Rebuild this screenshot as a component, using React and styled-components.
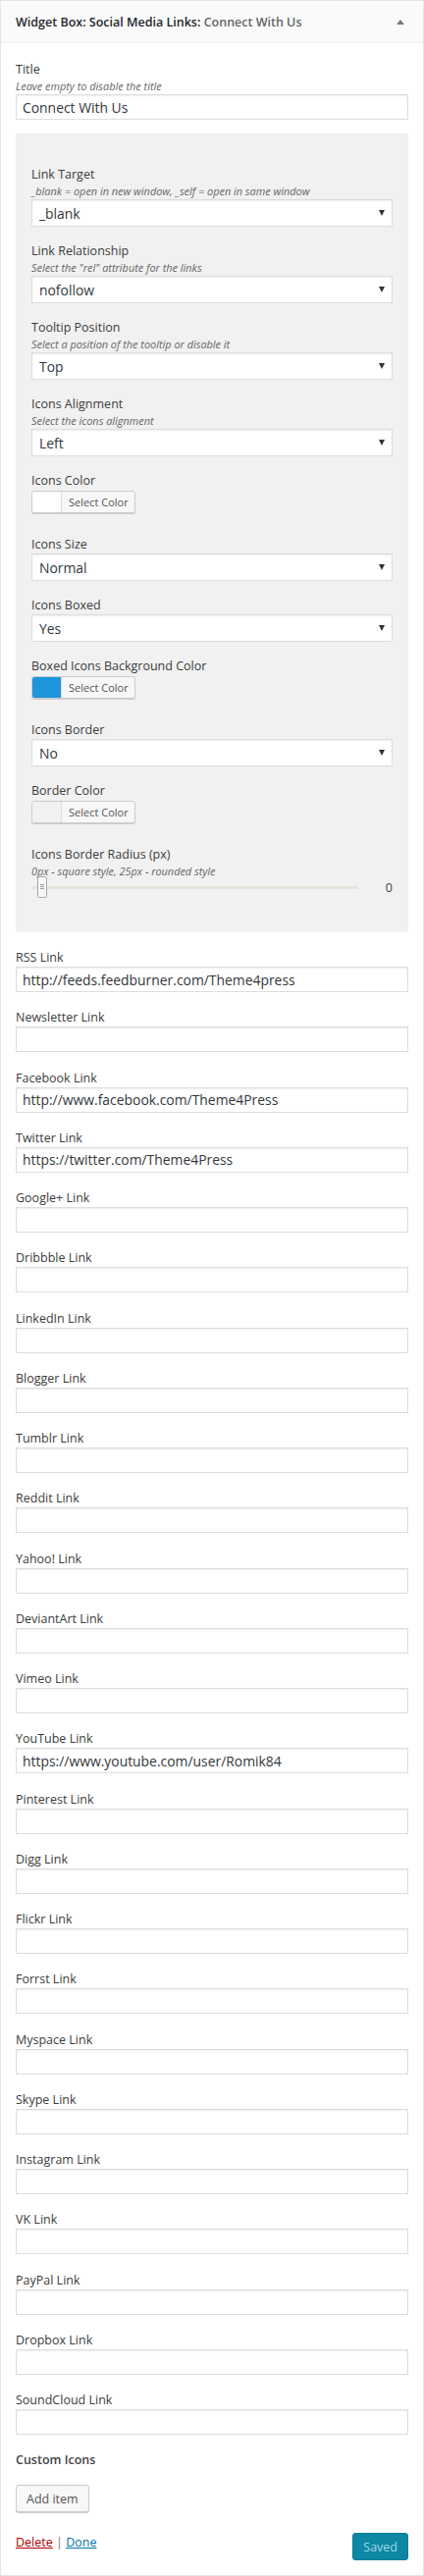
import React from 'react';
import styled, { createGlobalStyle } from 'styled-components';

const GlobalStyle = createGlobalStyle`
  html, body {
    margin: 0;
    padding: 0;
    background: #fff;
  }
  body {
    font-family: "Open Sans", "Noto Sans", sans-serif;
    font-size: 12.5px;
    color: #444;
  }
  * {
    box-sizing: border-box;
  }
`;

const Widget = styled.div`
  width: 432px;
  border: 1px solid #e5e5e5;
  background: #fff;
`;

const WidgetTop = styled.div`
  display: flex;
  align-items: center;
  justify-content: space-between;
  height: 43px;
  padding: 0 19px 0 15px;
  background: #fafafa;
  border-bottom: 1px solid #eee;
`;

const WidgetTitle = styled.h3`
  margin: 0;
  font-size: 12.5px;
  font-weight: 600;
  color: #23282d;
  white-space: nowrap;
`;

const InTitle = styled.span`
  color: #666;
`;

const ToggleArrow = styled.span`
  width: 0;
  height: 0;
  border-left: 4px solid transparent;
  border-right: 4px solid transparent;
  border-bottom: 5px solid #72777c;
`;

const WidgetInside = styled.form`
  padding: 18px 15px 15px;
`;

const Field = styled.div`
  margin-bottom: ${(p) => p.$gap ?? 16}px;
`;

const Label = styled.label`
  display: block;
  line-height: 18px;
  font-size: 12.5px;
  color: #3c3c3c;
`;

const Desc = styled.div`
  line-height: 16px;
  font-size: 10.9px;
  font-style: italic;
  color: #666;
  white-space: nowrap;
`;

const TextInput = styled.input`
  display: block;
  width: 100%;
  height: 26px;
  margin: 0;
  padding: 0 6px;
  border: 1px solid #ddd;
  border-radius: 0;
  box-shadow: inset 0 1px 2px rgba(0, 0, 0, 0.07);
  background: #fff;
  font-family: inherit;
  font-size: 13.9px;
  color: #32373c;
  outline: none;
`;

const SettingsBox = styled.div`
  margin-bottom: 17px;
  padding: 33px 16px 35px;
  background: #f1f1f1;
`;

const SelectWrap = styled.div`
  position: relative;
  height: 28px;
`;

const Select = styled.select`
  display: block;
  width: 100%;
  height: 28px;
  margin: 0;
  padding: 0 24px 0 7px;
  appearance: none;
  border: 1px solid #ddd;
  border-radius: 0;
  box-shadow: inset 0 1px 2px rgba(0, 0, 0, 0.07);
  background: #fff;
  font-family: inherit;
  font-size: 13.9px;
  color: #32373c;
  outline: none;
`;

const SelectArrow = styled.span`
  position: absolute;
  right: 8px;
  top: 11px;
  width: 0;
  height: 0;
  border-left: 3px solid transparent;
  border-right: 3px solid transparent;
  border-top: 6px solid #333;
  pointer-events: none;
`;

const ColorButton = styled.button`
  display: flex;
  align-items: stretch;
  height: 23px;
  margin: 1px 0 0;
  padding: 0;
  border: 1px solid #ccc;
  border-radius: 3px;
  box-shadow: 0 1px 0 #ccc;
  background: #f7f7f7;
  overflow: hidden;
  cursor: pointer;
  font-family: inherit;
`;

const Swatch = styled.span`
  width: 30px;
  background: ${(p) => p.$color};
  border-right: 1px solid #ddd;
`;

const SwatchText = styled.span`
  display: flex;
  align-items: center;
  padding: 0 6px 0 7px;
  font-size: 11px;
  color: #555;
`;

const SliderRow = styled.div`
  display: flex;
  align-items: center;
  height: 22px;
  margin-top: -3px;
`;

const Track = styled.div`
  position: relative;
  flex: 1;
  height: 3px;
  margin-left: 1px;
  background: #e8e4dc;
`;

const Handle = styled.span`
  position: absolute;
  left: 5px;
  top: -10px;
  display: flex;
  align-items: center;
  justify-content: center;
  width: 10px;
  height: 22px;
  border: 1px solid #aaa;
  border-radius: 2px;
  background: #f7f7f7;
`;

const Grip = styled.span`
  width: 4px;
  height: 5px;
  border-top: 1px solid #999;
  border-bottom: 1px solid #999;
  background: linear-gradient(#999, #999) center / 100% 1px no-repeat;
`;

const SliderValue = styled.span`
  width: 35px;
  text-align: right;
  font-size: 12.5px;
  color: #444;
`;

const SectionTitle = styled.h4`
  margin: 0;
  line-height: 18px;
  font-size: 12.5px;
  font-weight: 600;
  color: #444;
`;

const Button = styled.button`
  display: block;
  height: 28px;
  margin: 16px 0 0;
  padding: 0 10px;
  border: 1px solid #ccc;
  border-radius: 3px;
  box-shadow: 0 1px 0 #ccc;
  background: #f7f7f7;
  font-family: inherit;
  font-size: 12.5px;
  color: #555;
  cursor: pointer;
`;

const Actions = styled.div`
  display: flex;
  justify-content: space-between;
  align-items: flex-start;
  margin-top: 21px;
`;

const ActionLinks = styled.div`
  line-height: 20px;
  font-size: 12.5px;
  color: #72777c;
`;

const ActionLink = styled.a`
  color: ${(p) => (p.$danger ? '#a00' : '#0073aa')};
  text-decoration: underline;
`;

const SaveButton = styled.button`
  height: 28px;
  padding: 0 10px;
  border: 1px solid #0a7b95;
  border-radius: 3px;
  background: #0d87a3;
  font-family: inherit;
  font-size: 12.5px;
  color: #a3d8e6;
`;

const settings = [
  { label: 'Link Target', desc: '_blank = open in new window, _self = open in same window', value: '_blank' },
  { label: 'Link Relationship', desc: 'Select the "rel" attribute for the links', value: 'nofollow' },
  { label: 'Tooltip Position', desc: 'Select a position of the tooltip or disable it', value: 'Top' },
  { label: 'Icons Alignment', desc: 'Select the icons alignment', value: 'Left' },
  { label: 'Icons Color', color: '#ffffff' },
  { label: 'Icons Size', value: 'Normal' },
  { label: 'Icons Boxed', value: 'Yes' },
  { label: 'Boxed Icons Background Color', color: '#1e96dc' },
  { label: 'Icons Border', value: 'No' },
  { label: 'Border Color', color: '#f1f1f1' },
];

const links = [
  ['RSS', 'http://feeds.feedburner.com/Theme4press'],
  ['Newsletter', ''],
  ['Facebook', 'http://www.facebook.com/Theme4Press'],
  ['Twitter', 'https://twitter.com/Theme4Press'],
  ['Google+', ''],
  ['Dribbble', ''],
  ['LinkedIn', ''],
  ['Blogger', ''],
  ['Tumblr', ''],
  ['Reddit', ''],
  ['Yahoo!', ''],
  ['DeviantArt', ''],
  ['Vimeo', ''],
  ['YouTube', 'https://www.youtube.com/user/Romik84'],
  ['Pinterest', ''],
  ['Digg', ''],
  ['Flickr', ''],
  ['Forrst', ''],
  ['Myspace', ''],
  ['Skype', ''],
  ['Instagram', ''],
  ['VK', ''],
  ['PayPal', ''],
  ['Dropbox', ''],
  ['SoundCloud', ''],
];

function Setting({ item }) {
  if (item.color) {
    return (
      <Field $gap={23}>
        <Label>{item.label}</Label>
        <ColorButton type="button">
          <Swatch $color={item.color} />
          <SwatchText>Select Color</SwatchText>
        </ColorButton>
      </Field>
    );
  }
  return (
    <Field>
      <Label>{item.label}</Label>
      {item.desc && <Desc>{item.desc}</Desc>}
      <SelectWrap>
        <Select value={item.value} onChange={() => {}}>
          <option>{item.value}</option>
        </Select>
        <SelectArrow />
      </SelectWrap>
    </Field>
  );
}

export default function App() {
  return (
    <>
      <GlobalStyle />
      <Widget>
        <WidgetTop>
          <WidgetTitle>
            Widget Box: Social Media Links: <InTitle>Connect With Us</InTitle>
          </WidgetTitle>
          <ToggleArrow />
        </WidgetTop>
        <WidgetInside onSubmit={(e) => e.preventDefault()}>
          <Field $gap={14}>
            <Label>Title</Label>
            <Desc>Leave empty to disable the title</Desc>
            <TextInput readOnly value="Connect With Us" />
          </Field>

          <SettingsBox>
            {settings.map((item) => (
              <Setting key={item.label} item={item} />
            ))}
            <Field $gap={0}>
              <Label>Icons Border Radius (px)</Label>
              <Desc>0px - square style, 25px - rounded style</Desc>
              <SliderRow>
                <Track>
                  <Handle>
                    <Grip />
                  </Handle>
                </Track>
                <SliderValue>0</SliderValue>
              </SliderRow>
            </Field>
          </SettingsBox>

          {links.map(([name, url]) => (
            <Field key={name} $gap={17.25}>
              <Label>{name} Link</Label>
              <TextInput readOnly value={url} />
            </Field>
          ))}

          <SectionTitle>Custom Icons</SectionTitle>
          <Button type="button">Add item</Button>

          <Actions>
            <ActionLinks>
              <ActionLink href="#" $danger>Delete</ActionLink> | <ActionLink href="#">Done</ActionLink>
            </ActionLinks>
            <SaveButton type="button" disabled>Saved</SaveButton>
          </Actions>
        </WidgetInside>
      </Widget>
    </>
  );
}
